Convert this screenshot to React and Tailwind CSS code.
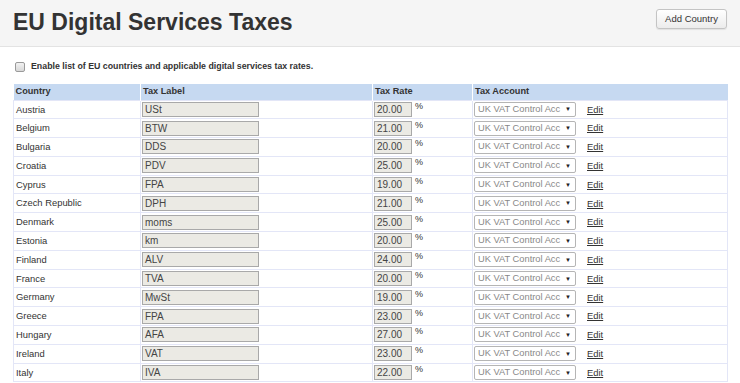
import React from "react";

const countries = [
  ["Austria", "USt", "20.00"],
  ["Belgium", "BTW", "21.00"],
  ["Bulgaria", "DDS", "20.00"],
  ["Croatia", "PDV", "25.00"],
  ["Cyprus", "FPA", "19.00"],
  ["Czech Republic", "DPH", "21.00"],
  ["Denmark", "moms", "25.00"],
  ["Estonia", "km", "20.00"],
  ["Finland", "ALV", "24.00"],
  ["France", "TVA", "20.00"],
  ["Germany", "MwSt", "19.00"],
  ["Greece", "FPA", "23.00"],
  ["Hungary", "AFA", "27.00"],
  ["Ireland", "VAT", "23.00"],
  ["Italy", "IVA", "22.00"],
];

export default function App() {
  return (
    <div className="w-[740px] h-[383px] overflow-hidden bg-white text-[#333] font-['Liberation_Sans',Arial,sans-serif]">
      {/* Header */}
      <div className="h-[47px] bg-[#f5f5f5] border-b border-[#e3e3e3] flex items-center justify-between pl-[13px] pr-[13px]">
        <h1 className="text-[23px] font-bold text-[#333] leading-none -mt-[2px]">EU Digital Services Taxes</h1>
        <button className="h-[20px] w-[71px] text-[9.5px] text-[#333] rounded-[3px] border border-[#c4c4c4] bg-gradient-to-b from-white to-[#ececec] shadow-[0_1px_1px_rgba(0,0,0,0.08)] -mt-[8px]">
          Add Country
        </button>
      </div>

      <div className="pl-[13px] pr-[13px]">
        {/* Checkbox */}
        <label className="flex items-center h-[37px] pt-[3px] font-bold">
          <span className="ml-[2px] w-[10px] h-[10px] rounded-[2px] border border-[#9a9a9a] bg-gradient-to-b from-[#f2f2f2] to-[#d8d8d8]" />
          <span className="ml-[6px] text-[8.8px]">Enable list of EU countries and applicable digital services tax rates.</span>
        </label>

        {/* Table */}
        <table className="w-[714px] border-collapse text-[9px] table-fixed">
          <colgroup>
            <col className="w-[127px]" />
            <col className="w-[232px]" />
            <col className="w-[100px]" />
            <col className="w-[255px]" />
          </colgroup>
          <thead>
            <tr className="bg-[#c6d9f1] h-[16px]">
              <th className="text-left font-bold px-[2px] border-r border-white text-[9.2px]">Country</th>
              <th className="text-left font-bold px-[2px] border-r border-white text-[9.2px]">Tax Label</th>
              <th className="text-left font-bold px-[2px] border-r border-white text-[9.2px]">Tax Rate</th>
              <th className="text-left font-bold px-[2px] text-[9.2px]">Tax Account</th>
            </tr>
          </thead>
          <tbody>
            {countries.map(([name, label, rate]) => (
              <tr key={name} className="h-[18.8px]">
                <td className="border border-[#e3e6f7] px-[2px] align-top pt-[3px] leading-[11px] text-[9.4px]">{name}</td>
                <td className="border border-[#e3e6f7] px-[1px] py-0">
                  <div className="w-[117px] h-[15px] border border-[#a9a9a9] bg-[#ebeae4] text-[10px] leading-[13px] pl-[2px] text-[#444]">{label}</div>
                </td>
                <td className="border border-[#e3e6f7] px-[1px] py-0">
                  <div className="flex items-start">
                    <div className="w-[38px] h-[15px] border border-[#a9a9a9] bg-[#ebeae4] text-[10px] leading-[13px] pl-[2px] text-[#444]">{rate}</div>
                    <span className="ml-[3px] -mt-[2px] text-[9px] leading-[13px]">%</span>
                  </div>
                </td>
                <td className="border border-[#e3e6f7] px-[1px] py-0">
                  <div className="flex items-center">
                    <div className="w-[102px] h-[15px] border border-[#b5b5b5] rounded-[2px] bg-white flex items-center justify-between pl-[3px] pr-[4px] text-[#888]">
                      <span className="whitespace-nowrap leading-none text-[9.3px]">UK VAT Control Acc</span>
                      <span className="text-[6px] text-[#222] leading-none">▼</span>
                    </div>
                    <a className="ml-[11px] underline text-[#333] text-[9.4px] leading-none">Edit</a>
                  </div>
                </td>
              </tr>
            ))}
          </tbody>
        </table>
      </div>
    </div>
  );
}
